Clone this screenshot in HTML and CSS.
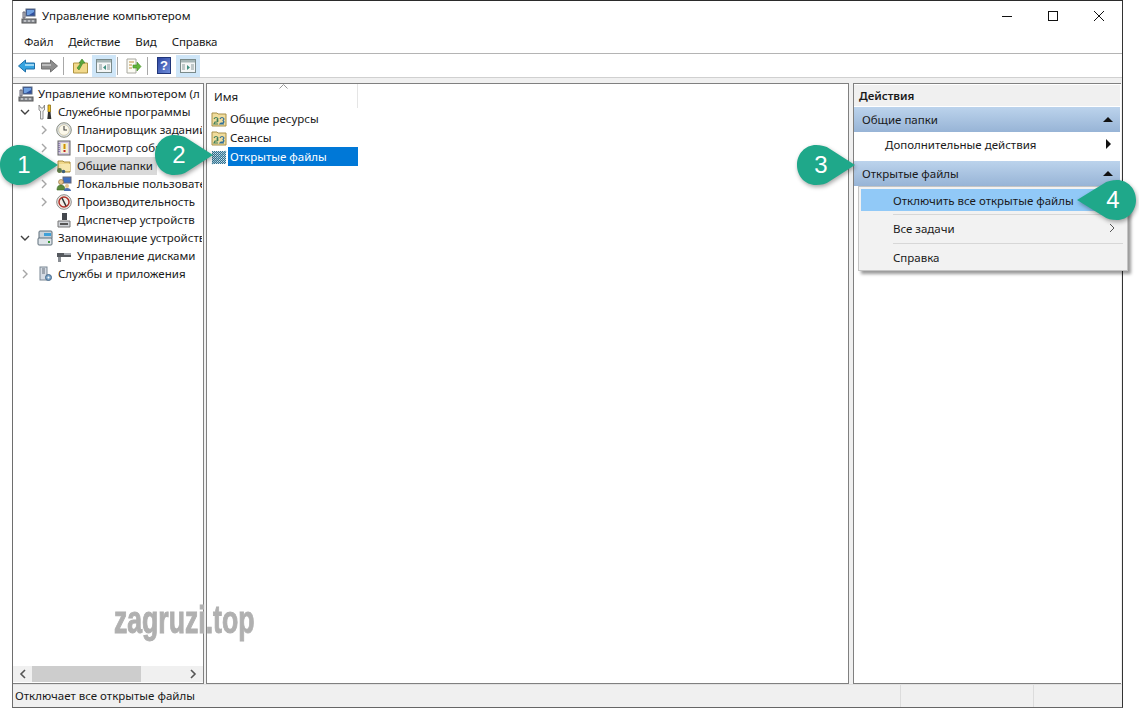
FILE: index.html
```html
<!DOCTYPE html>
<html lang="ru">
<head>
  <meta charset="UTF-8">
  <title>Управление компьютером</title>
  <link rel="stylesheet" href="styles.css">
</head>
<body>

<svg class="defs" width="0" height="0">
  <defs>
    <pattern id="dither" width="2" height="2" patternUnits="userSpaceOnUse">
      <rect width="2" height="2" fill="#2f6f8f"/>
      <rect width="1" height="1" fill="#cfe2ea"/>
      <rect x="1" y="1" width="1" height="1" fill="#9fc0cf"/>
    </pattern>
    <linearGradient id="helpfill" x1="0" y1="0" x2="1" y2="1">
      <stop offset="0" stop-color="#2c44a0"/>
      <stop offset="1" stop-color="#6f8fdc"/>
    </linearGradient>
  </defs>
  <symbol id="i-computer" viewBox="0 0 16 16">
    <rect x="5" y="1" width="9" height="7" fill="#2f4f9e" stroke="#5a6a80"/>
    <path d="M6 2h7v2l-5 3H6z" fill="#6fa0e0"/>
    <path d="M2 4h2v6H2z" fill="#c9ccd2" stroke="#667"/>
    <rect x="1" y="11" width="14" height="4" fill="#8b8f96" stroke="#555"/>
    <path d="M3 13h2M7 13h2M11 13h2" stroke="#eee"/>
  </symbol>
  <symbol id="i-tools" viewBox="0 0 16 16">
    <path d="M2 1v5l1.500 1v8h2.500V7l1.500-1V1L6 4H4z" fill="#f2f2f2" stroke="#777" stroke-width=".8"/>
    <path d="M11 1h2.500v7H11z" fill="#f3c322" stroke="#8a6d10" stroke-width=".8"/>
    <path d="M11 8h2.500l.8 7h-4z" fill="#333"/>
  </symbol>
  <symbol id="i-clock" viewBox="0 0 16 16">
    <circle cx="8" cy="8" r="7.300" fill="#dfe3e8" stroke="#8b8f80"/>
    <circle cx="8" cy="8" r="5.300" fill="#fbf8ea" stroke="#c0b890" stroke-width=".6"/>
    <path d="M8 4v4h3" fill="none" stroke="#444" stroke-width="1.100"/>
  </symbol>
  <symbol id="i-log" viewBox="0 0 16 16">
    <rect x="2" y="1" width="12" height="14" fill="#cfc4dc" stroke="#666"/>
    <rect x="5" y="3" width="7" height="10" fill="#f4f0d0"/>
    <path d="M8.500 4v5" stroke="#d09000" stroke-width="2"/>
    <path d="M8.500 10v2" stroke="#c02020" stroke-width="2"/>
    <path d="M3 3v10" stroke="#5a4a8a" stroke-dasharray="1 1"/>
  </symbol>
  <symbol id="i-share" viewBox="0 0 16 16">
    <path d="M2 3h5l1 1h6v10H2z" fill="#efd78a" stroke="#a88c3c"/>
    <path d="M3 6h11v7H3z" fill="#f7e7ad"/>
    <circle cx="3.500" cy="12.500" r="2.400" fill="#5c7a4a"/>
    <circle cx="7.500" cy="13.500" r="1.800" fill="#3d5f7a"/>
  </symbol>
  <symbol id="i-users" viewBox="0 0 16 16">
    <rect x="7" y="1" width="8" height="6" fill="#3f6fc0" stroke="#667"/>
    <circle cx="5" cy="6" r="2.500" fill="#e8c48c" stroke="#8a6a3a" stroke-width=".6"/>
    <path d="M1 14c0-4 2-5 4-5s4 1 4 5z" fill="#5a8a3c" stroke="#3d6a2a" stroke-width=".6"/>
    <circle cx="11" cy="10" r="2" fill="#e8c48c"/>
    <path d="M8 15c0-2 1-3 3-3s4 1 4 3z" fill="#4a6fb0"/>
  </symbol>
  <symbol id="i-perf" viewBox="0 0 16 16">
    <circle cx="8" cy="8" r="7.300" fill="#f2efe8" stroke="#8a8a8a"/>
    <circle cx="8" cy="8" r="5" fill="none" stroke="#b03028" stroke-width="1.500"/>
    <path d="M6 4l4 8" stroke="#333" stroke-width="1.500"/>
  </symbol>
  <symbol id="i-device" viewBox="0 0 16 16">
    <rect x="6" y="1" width="5" height="7" fill="#44484e"/>
    <path d="M2 9h12v6H2z" fill="#d0d3d8" stroke="#777"/>
    <path d="M4 12h8" stroke="#555" stroke-width="2"/>
  </symbol>
  <symbol id="i-storage" viewBox="0 0 16 16">
    <rect x="2" y="1" width="13" height="8" rx="1" fill="#c9d2da" stroke="#5f6f7a"/>
    <rect x="7" y="3" width="7" height="3" fill="#3fa0d8"/>
    <rect x="1" y="8" width="14" height="7" rx="1" fill="#dfe5ea" stroke="#5f6f7a"/>
    <rect x="11" y="11" width="2" height="2" fill="#3a9a3a"/>
  </symbol>
  <symbol id="i-disk" viewBox="0 0 16 16">
    <path d="M1 5h14v4H1z" fill="#55595e"/>
    <path d="M8 5h7v2H8z" fill="#a8acb2"/>
    <path d="M2 9h3v5H2z" fill="#8a8e94"/>
  </symbol>
  <symbol id="i-services" viewBox="0 0 16 16">
    <rect x="3" y="1" width="7" height="13" fill="#d6dce4" stroke="#7a8794"/>
    <path d="M5 3h3M5 5h3M5 7h3" stroke="#66707c"/>
    <circle cx="11.500" cy="11.500" r="3" fill="#7aa4c8" stroke="#4a6a8a"/>
    <circle cx="11.500" cy="11.500" r="1" fill="#fff"/>
  </symbol>
  <symbol id="i-sharefolder" viewBox="0 0 16 16">
    <path d="M1 2h5l1 1h8v12H1z" fill="#f0dc9c" stroke="#a89048"/>
    <path d="M3 8c1-2 3-2 4 0l-1 1 1 1-1 1H4l-1 2h4" fill="none" stroke="#3f7f5a" stroke-width="1.200"/>
    <path d="M9 8c1-2 3-2 4 0l-1 1.500 1 1.500-1 1H10l-1 1h4" fill="none" stroke="#2f6f9a" stroke-width="1.200"/>
  </symbol>
  <symbol id="i-files" viewBox="0 0 16 16">
    <rect x="1" y="2" width="14" height="13" fill="url(#dither)"/>
    <path d="M1 15L15 2" stroke="#5f97ad" stroke-width="2" opacity=".5"/>
  </symbol>
</svg>

<div class="window">
  <div class="titlebar">
    <svg class="ico"><use href="#i-computer"/></svg>
    <span class="title">Управление компьютером</span>
    <div class="winbtns">
      <svg width="12" height="12" viewBox="0 0 12 12"><path d="M1 6.500h10" stroke="#111"/></svg>
      <svg width="12" height="12" viewBox="0 0 12 12"><rect x="1.500" y="1.500" width="9" height="9" fill="none" stroke="#111"/></svg>
      <svg width="12" height="12" viewBox="0 0 12 12"><path d="M1 1l10 10M11 1L1 11" stroke="#111"/></svg>
    </div>
  </div>

  <div class="menubar">
    <span>Файл</span>
    <span>Действие</span>
    <span>Вид</span>
    <span>Справка</span>
  </div>

  <div class="toolbar">
    <svg class="tool" width="17" height="14" viewBox="0 0 17 14"><path d="M.5 7l7-6v3h9v6h-9v3z" fill="#35a3e0" stroke="#1f6fa8"/><path d="M7 5h9v2H7z" fill="#9bd6f4"/></svg>
    <svg class="tool tool-next" width="17" height="14" viewBox="0 0 17 14"><path d="M16.500 7l-7-6v3h-9v6h9v3z" fill="#8d8d8d" stroke="#707070"/><path d="M1 5h9v2H1z" fill="#bdbdbd"/></svg>
    <i class="sep sep-a"></i>
    <svg class="tool tool-up" width="15" height="16" viewBox="0 0 15 16"><path d="M.5 5h14v10H.5z" fill="#f2d98c" stroke="#b09440"/><path d="M4 10l4-5-2 0 3-4 3 4h-2l-4 7z" fill="#5aa83c" stroke="#3b7f28" stroke-width=".6"/></svg>
    <span class="toggle">
      <svg width="16" height="14" viewBox="0 0 16 14"><rect x=".5" y=".5" width="15" height="13" fill="#f4f6f6" stroke="#7a8a8a"/><path d="M1 1h14v2.500H1z" fill="#a5b5b5"/><path d="M3 6h3M3 8h3M3 10h3M11 6h3M11 8h3M11 10h3" stroke="#8a9a9a"/><path d="M10 6v5L7 8.500z" fill="#3f8f7f"/></svg>
    </span>
    <i class="sep sep-b"></i>
    <svg class="tool tool-export" width="17" height="16" viewBox="0 0 17 16"><path d="M2 1h9v14H2z" fill="#fbfbf4" stroke="#a8a8a0"/><path d="M4 4h5M4 7h3M4 10h3" stroke="#c09040"/><path d="M8 7h4V4l4 4.500-4 4.500v-3H8z" fill="#62b53a" stroke="#3f8a22" stroke-width=".6"/></svg>
    <i class="sep sep-c"></i>
    <svg class="tool tool-help" width="14" height="17" viewBox="0 0 14 17"><rect x=".5" y=".5" width="13" height="16" fill="url(#helpfill)" stroke="#20367a"/><text x="7" y="13" class="helpmark">?</text></svg>
    <span class="toggle toggle-b">
      <svg width="16" height="14" viewBox="0 0 16 14"><rect x=".5" y=".5" width="15" height="13" fill="#f4f6f6" stroke="#7a8a8a"/><path d="M1 1h14v2.500H1z" fill="#a5b5b5"/><path d="M2 6h3M2 8h3M2 10h3M11 6h3M11 8h3M11 10h3" stroke="#8a9a9a"/><path d="M7 6v5l3-2.500z" fill="#3f8f7f"/></svg>
    </span>
  </div>

  <div class="main">
    <div class="pane tree">
      <div class="tree-rows">
        <div class="row lvl0"><svg class="ico"><use href="#i-computer"/></svg><span>Управление компьютером (л</span></div>
        <div class="row lvl1"><svg class="tw" viewBox="0 0 10 10"><path d="M1 3l4 4 4-4" class="tw-open"/></svg><svg class="ico"><use href="#i-tools"/></svg><span>Служебные программы</span></div>
        <div class="row lvl2"><svg class="tw" viewBox="0 0 10 10"><path d="M3 1l4 4-4 4"/></svg><svg class="ico"><use href="#i-clock"/></svg><span>Планировщик заданий</span></div>
        <div class="row lvl2"><svg class="tw" viewBox="0 0 10 10"><path d="M3 1l4 4-4 4"/></svg><svg class="ico"><use href="#i-log"/></svg><span>Просмотр событий</span></div>
        <div class="row lvl2"><svg class="tw" viewBox="0 0 10 10"><path d="M3 1l4 4-4 4"/></svg><svg class="ico"><use href="#i-share"/></svg><span class="picked">Общие папки</span></div>
        <div class="row lvl2"><svg class="tw" viewBox="0 0 10 10"><path d="M3 1l4 4-4 4"/></svg><svg class="ico"><use href="#i-users"/></svg><span>Локальные пользователи</span></div>
        <div class="row lvl2"><svg class="tw" viewBox="0 0 10 10"><path d="M3 1l4 4-4 4"/></svg><svg class="ico"><use href="#i-perf"/></svg><span>Производительность</span></div>
        <div class="row lvl2"><i class="tw"></i><svg class="ico"><use href="#i-device"/></svg><span>Диспетчер устройств</span></div>
        <div class="row lvl1"><svg class="tw" viewBox="0 0 10 10"><path d="M1 3l4 4 4-4" class="tw-open"/></svg><svg class="ico"><use href="#i-storage"/></svg><span>Запоминающие устройства</span></div>
        <div class="row lvl2"><i class="tw"></i><svg class="ico"><use href="#i-disk"/></svg><span>Управление дисками</span></div>
        <div class="row lvl1"><svg class="tw" viewBox="0 0 10 10"><path d="M3 1l4 4-4 4"/></svg><svg class="ico"><use href="#i-services"/></svg><span>Службы и приложения</span></div>
      </div>
      <div class="hscroll">
        <svg width="8" height="10" viewBox="0 0 8 10"><path d="M6 1L2 5l4 4" fill="none" stroke="#555" stroke-width="1.600"/></svg>
        <div class="track"><div class="thumb"></div></div>
        <svg width="8" height="10" viewBox="0 0 8 10"><path d="M2 1l4 4-4 4" fill="none" stroke="#555" stroke-width="1.600"/></svg>
      </div>
    </div>

    <div class="pane list">
      <div class="list-head"><span>Имя</span></div>
      <div class="item"><svg class="ico"><use href="#i-sharefolder"/></svg><span>Общие ресурсы</span></div>
      <div class="item"><svg class="ico"><use href="#i-sharefolder"/></svg><span>Сеансы</span></div>
      <div class="item item-on"><svg class="ico"><use href="#i-files"/></svg><span>Открытые файлы</span></div>
    </div>

    <div class="pane actions">
      <div class="act-title">Действия</div>
      <div class="act-head"><span>Общие папки</span><b class="up"></b></div>
      <div class="act-row"><span>Дополнительные действия</span><b class="more"></b></div>
      <div class="act-head"><span>Открытые файлы</span><b class="up"></b></div>
    </div>
  </div>

  <div class="statusbar">
    <div class="st st-a">Отключает все открытые файлы</div>
    <div class="st st-b"></div>
    <div class="st st-c"></div>
  </div>
</div>

<!-- context menu over the actions pane -->
<div class="ctx">
  <div class="ctx-item ctx-on">Отключить все открытые файлы</div>
  <div class="ctx-line"></div>
  <div class="ctx-item">Все задачи<svg width="6" height="10" viewBox="0 0 6 10"><path d="M1 1l4 4-4 4" fill="none" stroke="#555"/></svg></div>
  <div class="ctx-line"></div>
  <div class="ctx-item">Справка</div>
</div>

<div class="caret"><svg width="9" height="5" viewBox="0 0 9 5"><path d="M.5 4.500l4-4 4 4" fill="none" stroke="#999"/></svg></div>

<div class="mark">zagruzi.top</div>

<!-- numbered callouts -->
<div class="callout c1">
  <svg width="60" height="44" viewBox="0 0 60 44"><path d="M20 2c5 0 10 1 14 4l25 16-25 16c-4 3-9 4-14 4C9 42 1 33 1 22S9 2 20 2z" class="bubble"/></svg>
  <span>1</span>
</div>
<div class="callout c2">
  <svg width="60" height="44" viewBox="0 0 60 44"><path d="M20 2c5 0 10 1 14 4l25 16-25 16c-4 3-9 4-14 4C9 42 1 33 1 22S9 2 20 2z" class="bubble"/></svg>
  <span>2</span>
</div>
<div class="callout c3">
  <svg width="60" height="44" viewBox="0 0 60 44"><path d="M20 2c5 0 10 1 14 4l25 16-25 16c-4 3-9 4-14 4C9 42 1 33 1 22S9 2 20 2z" class="bubble"/></svg>
  <span>3</span>
</div>
<div class="callout c4">
  <svg width="62" height="44" viewBox="0 0 62 44"><path d="M42 2c-5 0-10 1-14 4L2 22l26 16c4 3 9 4 14 4 11 0 19-9 19-20S53 2 42 2z" class="bubble"/></svg>
  <span>4</span>
</div>

</body>
</html>
```

FILE: styles.css
```css
* {
  box-sizing: border-box;
}

html, body {
  height: 708px;
  overflow: hidden;
}

body {
  margin: 0;
  background: #fff;
  font-family: "Noto Sans", sans-serif;
  font-size: 11.5px;
  color: #1a1a1a;
}

.defs {
  position: absolute;
}

.ico {
  width: 16px;
  height: 16px;
  flex: none;
}

.window {
  margin-left: 12px;
  width: 1111px;
  height: 708px;
  display: flex;
  flex-direction: column;
  background: #f0f0f0;
  border-top: 1px solid #2b2b2b;
  border-left: 1px solid #6e6e6e;
  border-right: 1px solid #333;
  border-bottom: 1px solid #666;
}

.titlebar {
  height: 30px;
  display: flex;
  align-items: center;
  background: #fff;
  padding-left: 8px;
}

.title {
  margin-left: 5px;
  padding-bottom: 1px;
}

.winbtns {
  margin-left: auto;
  display: flex;
  gap: 34px;
  padding-right: 17px;
}

.menubar {
  height: 23px;
  display: flex;
  align-items: center;
  gap: 15px;
  padding: 0 0 1px 11px;
  background: #fff;
  border-bottom: 1px solid #b4b4b4;
  letter-spacing: -0.1px;
}

.toolbar {
  height: 24px;
  display: flex;
  align-items: center;
  padding-left: 5px;
  background: #fff;
  border-bottom: 1px solid #d0d0d0;
}

.tool-next {
  margin-left: 6px;
}

.sep {
  width: 1px;
  height: 18px;
  background: #a8a8a8;
}

.sep-a {
  margin: 0 9px 0 5px;
}

.sep-b {
  margin: 0 7px 0 1px;
}

.sep-c {
  margin: 0 9px 0 5px;
}

.helpmark {
  fill: #fff;
  font-family: "Liberation Sans", sans-serif;
  font-size: 13px;
  font-weight: bold;
  text-anchor: middle;
}

.toggle {
  margin-left: 4px;
  width: 24px;
  height: 22px;
  display: flex;
  align-items: center;
  justify-content: center;
  background: #cfe6f8;
}

.toggle-b {
  margin-left: 5px;
}

.main {
  flex: 1;
  min-height: 0;
  display: flex;
  padding-top: 5px;
}

.pane {
  background: #fff;
  border: 1px solid #808080;
}

.tree {
  width: 191px;
  display: flex;
  flex-direction: column;
  border-left: none;
  border-bottom: 1px solid #808080;
}

.tree-rows {
  flex: 1;
  padding-top: 1px;
}

.row {
  height: 18px;
  display: flex;
  align-items: center;
  white-space: nowrap;
  overflow: hidden;
  margin-right: 1px;
}

.lvl0 {
  padding-left: 5px;
}

.lvl0 .ico {
  margin-right: 2px;
}

.lvl1 {
  padding-left: 7px;
}

.lvl2 {
  padding-left: 26px;
}

.tw {
  width: 10px;
  height: 10px;
  flex: none;
  margin-right: 7px;
}

.tw path {
  fill: none;
  stroke: #a6a6a6;
  stroke-width: 1.400;
}

.tw .tw-open {
  stroke: #404040;
}

.lvl1 .ico,
.lvl2 .ico {
  margin-right: 3px;
}

.row span {
  padding: 0 0 1px 2px;
}

.row .picked {
  background: #d9d9d9;
  padding-right: 4px;
  line-height: 17px;
}

.hscroll {
  height: 16px;
  display: flex;
  align-items: center;
  justify-content: space-between;
  gap: 5px;
  padding: 0 6px;
  background: #f0f0f0;
  margin-bottom: 1px;
}

.track {
  flex: 1;
  height: 16px;
}

.thumb {
  width: 109px;
  height: 16px;
  background: #cdcdcd;
}

.list {
  width: 643px;
  margin-left: 2px;
}

.list-head {
  width: 151px;
  height: 24px;
  display: flex;
  align-items: center;
  padding-left: 7px;
  margin-bottom: 1px;
  border-right: 1px solid #e5e5e5;
  padding-top: 1px;
}

.item {
  height: 19px;
  width: 151px;
  display: flex;
  align-items: center;
  padding-left: 4px;
}

.item span {
  flex: 1;
  margin-left: 1px;
  padding-left: 2px;
  line-height: 19px;
}

.item-on span {
  background: #0078d7;
  color: #fff;
}

.actions {
  width: 268px;
  margin-left: 4px;
  border-right: none;
  padding-top: 1px;
}

.act-title {
  height: 21px;
  margin: 0 1px 1px 0;
  padding-left: 5px;
  line-height: 21px;
  font-weight: 600;
  background: #f0f0f0;
}

.act-head {
  height: 25px;
  display: flex;
  align-items: center;
  justify-content: space-between;
  margin-right: 1px;
  padding: 0 7px 0 8px;
  background: linear-gradient(#bcd3ec, #97b4d6);
}

.act-row {
  height: 29px;
  display: flex;
  align-items: center;
  justify-content: space-between;
  padding: 0 10px 5px 31px;
}

.up {
  width: 0;
  height: 0;
  border: 5px solid transparent;
  border-top: none;
  border-bottom: 5px solid #111;
}

.more {
  width: 0;
  height: 0;
  border: 5px solid transparent;
  border-right: none;
  border-left: 5px solid #111;
}

.statusbar {
  height: 23px;
  display: flex;
  background: #f0f0f0;
  border-top: 1px solid #e2e2e2;
}

.st {
  line-height: 22px;
  padding-left: 2px;
  border-right: 1px solid #dcdcdc;
}

.st-a {
  width: 888px;
}

.st-b {
  width: 133px;
}

.st-c {
  flex: 1;
  border-right: none;
}

.ctx {
  position: absolute;
  left: 858px;
  top: 186px;
  width: 270px;
  height: 85px;
  padding: 2px 2px;
  background: #f2f2f2;
  border: 1px solid #c4c4c4;
  box-shadow: 3px 3px 3px rgba(0, 0, 0, 0.4);
}

.ctx-item {
  height: 22px;
  display: flex;
  align-items: center;
  justify-content: space-between;
  padding: 0 10px 2px 32px;
}

.ctx-on {
  background: #91c9f7;
  padding-bottom: 0;
}

.ctx-line {
  height: 1px;
  margin: 3px 2px 3px 32px;
  background: #d7d7d7;
}

.caret {
  position: absolute;
  left: 279px;
  top: 84px;
  line-height: 0;
}

.mark {
  position: absolute;
  left: 114px;
  top: 598px;
  font-family: "Liberation Sans", sans-serif;
  font-size: 38px;
  font-weight: bold;
  line-height: 44px;
  color: #b0b0b0;
  -webkit-text-stroke: 1px #b0b0b0;
  transform: scaleX(0.7);
  transform-origin: left center;
}

.callout {
  position: absolute;
  line-height: 0;
}

.bubble {
  fill: #1fa88a;
  filter: drop-shadow(1px 2px 2px rgba(0, 0, 0, 0.35));
}

.callout span {
  position: absolute;
  top: 22px;
  left: 25px;
  transform: translate(-50%, -50%);
  font-family: "Liberation Sans", sans-serif;
  font-size: 24px;
  line-height: 24px;
  color: #fff;
}

.callout svg {
  overflow: visible;
}

.c1 {
  left: -1px;
  top: 143px;
}

.c2 {
  left: 154px;
  top: 133px;
}

.c3 {
  left: 796px;
  top: 143px;
}

.c4 {
  left: 1075px;
  top: 178px;
}

.c4 span {
  left: 38px;
}
```
